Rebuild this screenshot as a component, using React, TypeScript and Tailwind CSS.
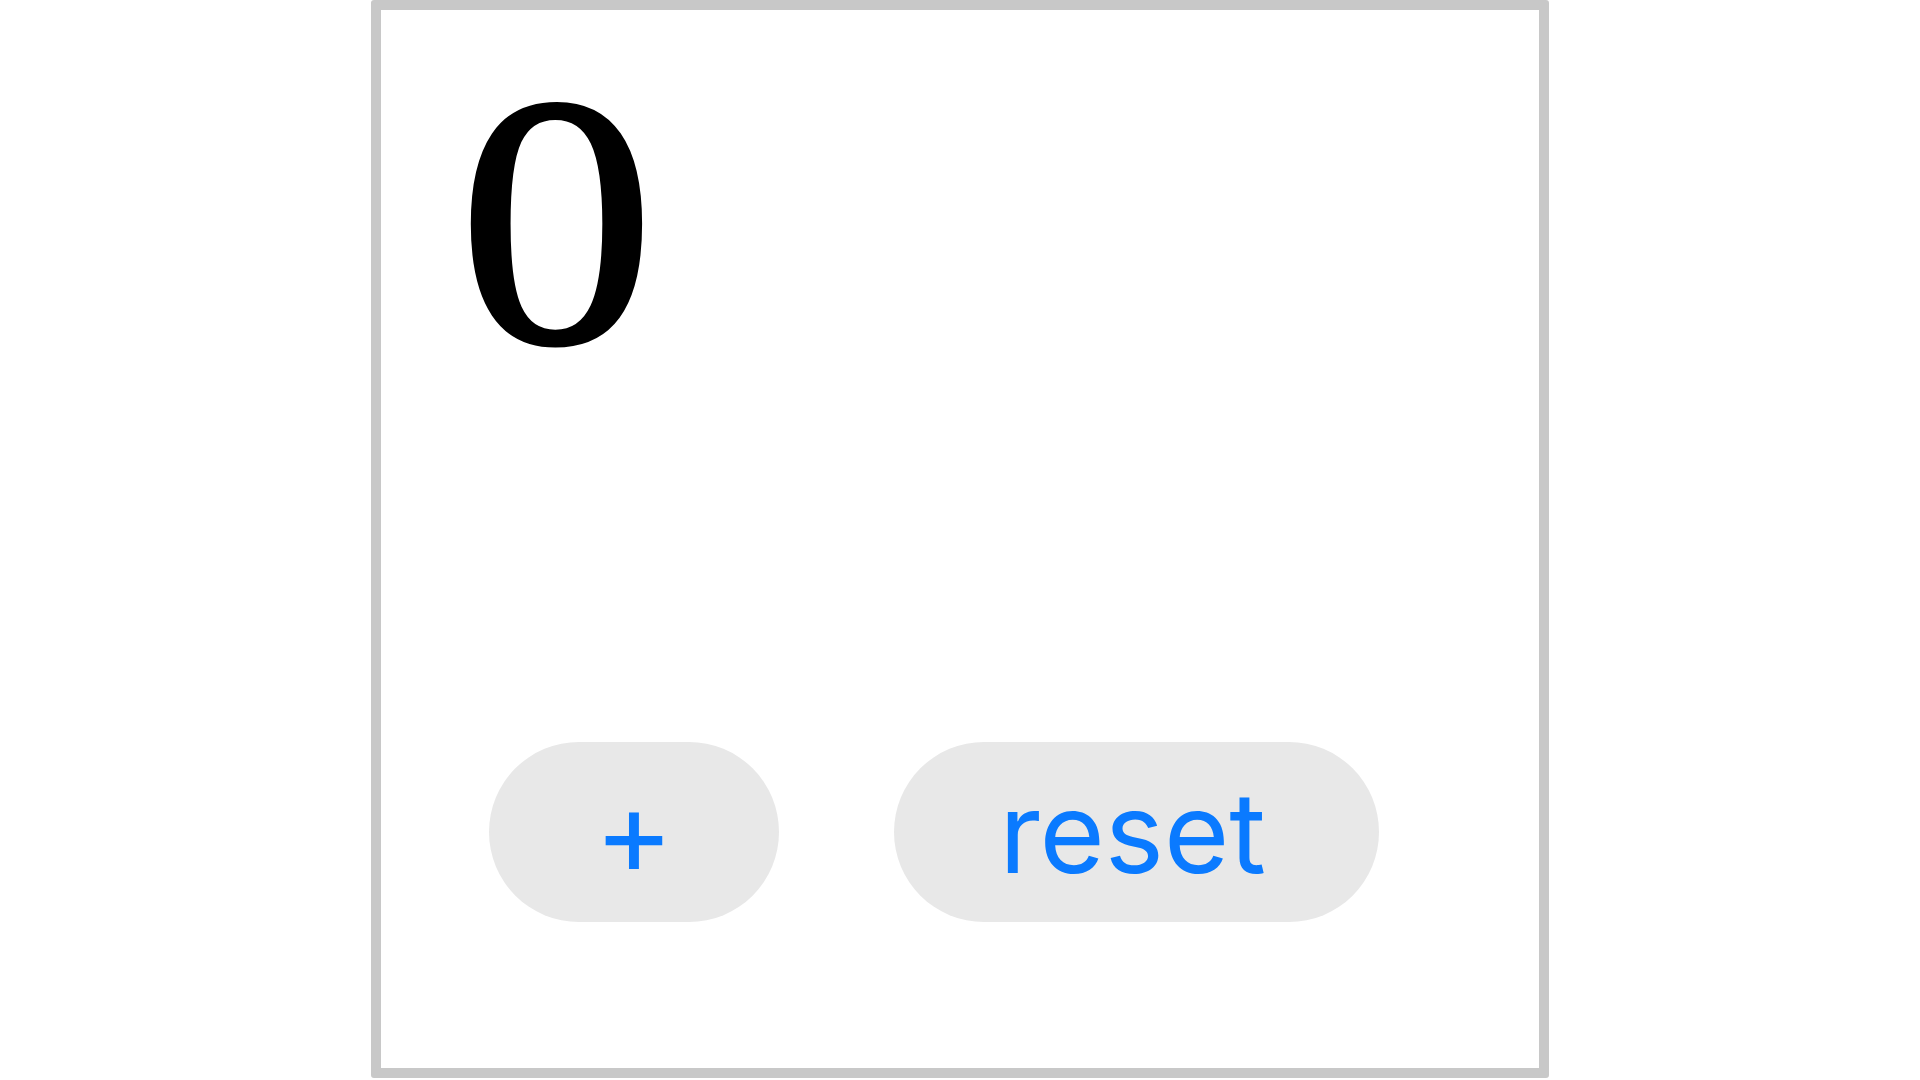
export default function App() {
  return (
    <div className="min-h-screen bg-white">
      <div className="mx-auto flex h-[1078px] w-[1178px] flex-col rounded-[3px] border-[10px] border-[#c8c8c8] bg-white">
        <div className="pl-[77px] pt-[32px]">
          <span
            className="inline-block origin-left scale-x-[1.1] text-[358px] leading-none text-black [-webkit-text-stroke:4px_black]"
            style={{ fontFamily: '"Liberation Serif", "Times New Roman", serif' }}
          >
            0
          </span>
        </div>
        <div
          className="mt-auto mb-[146px] flex gap-[115px] pl-[108px]"
          style={{ fontFamily: "Inter, sans-serif" }}
        >
          <button className="flex h-[180px] w-[290px] items-center justify-center rounded-full bg-[#e8e8e8] text-[120px] leading-none text-[#0a7aff]">
            +
          </button>
          <button className="flex h-[180px] w-[485px] items-center justify-center rounded-full bg-[#e8e8e8] pr-[8px] text-[112px] leading-none text-[#0a7aff]">
            reset
          </button>
        </div>
      </div>
    </div>
  );
}
